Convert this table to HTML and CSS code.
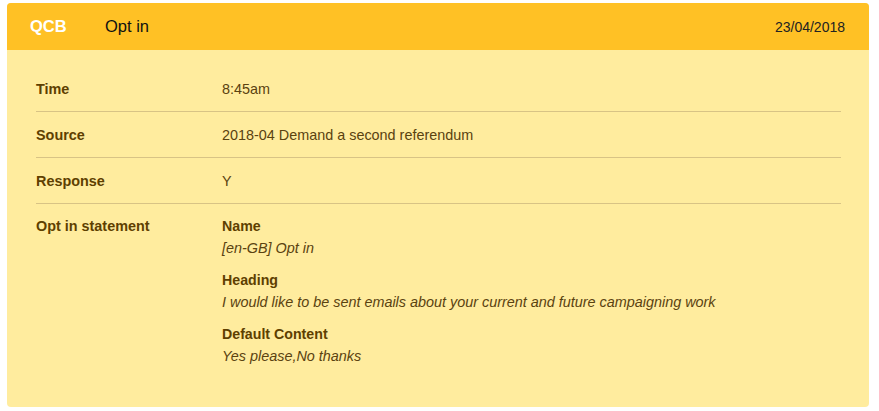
FILE: index.html
```html
<!DOCTYPE html>
<html>
<head>
<meta charset="utf-8">
<link rel="stylesheet" href="styles.css">
</head>
<body>
<div class="card">
  <div class="card-header">
    <div class="brand">QCB</div>
    <div class="title">Opt in</div>
    <div class="date">23/04/2018</div>
  </div>
  <div class="card-body">
    <div class="row">
      <div class="label">Time</div>
      <div class="value">8:45am</div>
    </div>
    <div class="row">
      <div class="label">Source</div>
      <div class="value">2018-04 Demand a second referendum</div>
    </div>
    <div class="row">
      <div class="label">Response</div>
      <div class="value">Y</div>
    </div>
    <div class="row last">
      <div class="label">Opt in statement</div>
      <div class="value">
        <div class="sub">
          <div class="sub-label">Name</div>
          <div class="sub-value">[en-GB] Opt in</div>
        </div>
        <div class="sub">
          <div class="sub-label">Heading</div>
          <div class="sub-value">I would like to be sent emails about your current and future campaigning work</div>
        </div>
        <div class="sub">
          <div class="sub-label">Default Content</div>
          <div class="sub-value">Yes please,No thanks</div>
        </div>
      </div>
    </div>
  </div>
</div>
</body>
</html>
```

FILE: styles.css
```css
html, body {
  margin: 0;
  padding: 0;
  background: #ffffff;
}
body {
  padding: 3px 11px 0 7px;
  font-family: "Liberation Sans", Arial, sans-serif;
}
.card {
  width: 862px;
  height: 404px;
  background: #ffec9e;
  border-radius: 4px;
  overflow: hidden;
}
.card-header {
  height: 47px;
  background: #ffc125;
  display: flex;
  align-items: center;
  padding: 0 24px 0 23px;
}
.brand {
  color: #ffffff;
  font-weight: bold;
  font-size: 16.5px;
  width: 75px;
}
.title {
  color: #111;
  font-size: 16.5px;
  flex: 1;
}
.date {
  color: #222;
  font-size: 14px;
}
.card-body {
  padding: 16px 28px 0 29px;
}
.row {
  display: flex;
  border-bottom: 1px solid #d8c385;
  padding: 13px 0 12px 0;
  line-height: 20px;
}
.row.last {
  border-bottom: none;
  padding-top: 12px;
}
.label {
  width: 186px;
  font-weight: bold;
  font-size: 14.4px;
  color: #5e3f00;
}
.value {
  color: #5a4210;
  font-size: 14.4px;
}
.sub {
  margin-bottom: 10px;
}
.sub-label {
  font-weight: bold;
  font-size: 14.2px;
  color: #5e3f00;
  line-height: 20px;
}
.sub-value {
  font-style: italic;
  color: #5a4210;
  font-size: 14.4px;
  line-height: 24px;
}
```
